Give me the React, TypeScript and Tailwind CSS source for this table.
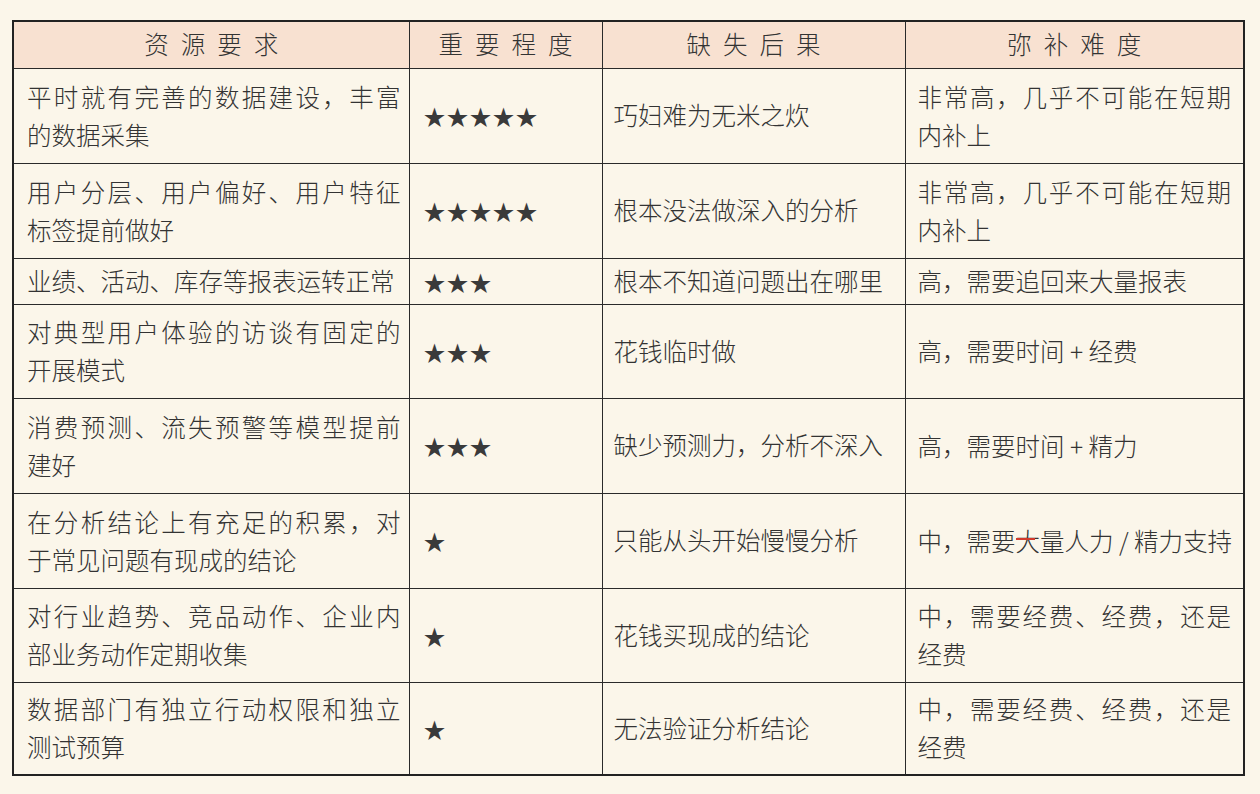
import React from "react";

type Row = {
  h: string;
  req: string[];
  stars: number;
  loss: string;
  fix: React.ReactNode[];
};

const rows: Row[] = [
  { h: "h-[95px]", req: ["平时就有完善的数据建设，丰富", "的数据采集"], stars: 5, loss: "巧妇难为无米之炊", fix: ["非常高，几乎不可能在短期", "内补上"] },
  { h: "h-[95px]", req: ["用户分层、用户偏好、用户特征", "标签提前做好"], stars: 5, loss: "根本没法做深入的分析", fix: ["非常高，几乎不可能在短期", "内补上"] },
  { h: "h-[46px]", req: ["业绩、活动、库存等报表运转正常"], stars: 3, loss: "根本不知道问题出在哪里", fix: ["高，需要追回来大量报表"] },
  { h: "h-[94px]", req: ["对典型用户体验的访谈有固定的", "开展模式"], stars: 3, loss: "花钱临时做", fix: ["高，需要时间 + 经费"] },
  { h: "h-[95px]", req: ["消费预测、流失预警等模型提前", "建好"], stars: 3, loss: "缺少预测力，分析不深入", fix: ["高，需要时间 + 精力"] },
  {
    h: "h-[95px]",
    req: ["在分析结论上有充足的积累，对", "于常见问题有现成的结论"],
    stars: 1,
    loss: "只能从头开始慢慢分析",
    fix: [
      <>
        中，需要
        <span className="relative">
          大
          <span className="absolute left-0 top-[44%] h-[2px] w-[80%] bg-[#d23a2c]" />
        </span>
        量人力 / 精力支持
      </>,
    ],
  },
  { h: "h-[94px]", req: ["对行业趋势、竞品动作、企业内", "部业务动作定期收集"], stars: 1, loss: "花钱买现成的结论", fix: ["中，需要经费、经费，还是", "经费"] },
  { h: "h-[93px]", req: ["数据部门有独立行动权限和独立", "测试预算"], stars: 1, loss: "无法验证分析结论", fix: ["中，需要经费、经费，还是", "经费"] },
];

const Lines = ({ lines }: { lines: React.ReactNode[] }) =>
  lines.length === 1 ? (
    <div className="whitespace-nowrap leading-[38px]">{lines[0]}</div>
  ) : (
    <div className="leading-[38px]">
      {lines.map((l, i) => (
        <div key={i} className={i < lines.length - 1 ? "text-justify [text-align-last:justify]" : ""}>
          {l}
        </div>
      ))}
    </div>
  );

export default function App() {
  return (
    <div className="min-h-[794px] w-[1260px] bg-[#fbf6ea] pl-[12px] pt-[20px] font-['Noto_Sans_CJK_SC',sans-serif] font-light text-[24.5px] text-[#333]">
      <table className="w-[1231px] table-fixed border-collapse border-2 border-[#222]">
        <colgroup>
          <col className="w-[396px]" />
          <col className="w-[193px]" />
          <col className="w-[303px]" />
          <col className="w-[339px]" />
        </colgroup>
        <thead>
          <tr className="h-[47px] bg-[#f8e1d1]">
            {["资源要求", "重要程度", "缺失后果", "弥补难度"].map((t) => (
              <th key={t} className="border border-[#2a2a2a] text-center font-light tracking-[12px] pl-[12px]">
                {t}
              </th>
            ))}
          </tr>
        </thead>
        <tbody>
          {rows.map((r, i) => (
            <tr key={i} className={r.h}>
              <td className="border border-[#2a2a2a] pl-[13px] pr-[8px] align-middle">
                <Lines lines={r.req} />
              </td>
              <td className="border border-[#2a2a2a] pl-[14px] align-middle">
                <span className="text-[22px] tracking-[1px] text-[#3a3a3a]">{"★".repeat(r.stars)}</span>
              </td>
              <td className="border border-[#2a2a2a] pl-[11px] align-middle whitespace-nowrap">{r.loss}</td>
              <td className="border border-[#2a2a2a] pl-[12px] pr-[12px] align-middle">
                <Lines lines={r.fix} />
              </td>
            </tr>
          ))}
        </tbody>
      </table>
    </div>
  );
}
